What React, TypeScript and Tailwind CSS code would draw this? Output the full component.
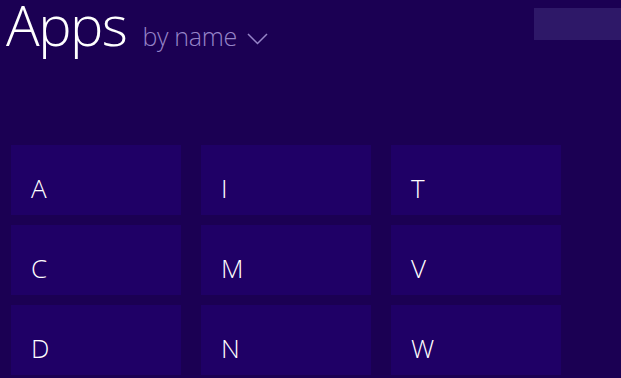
const groups = ["A", "I", "T", "C", "M", "V", "D", "N", "W"];

export default function App() {
  return (
    <div className="h-screen w-full overflow-hidden bg-[#1b0053] text-white" style={{ fontFamily: "'Open Sans', 'Lato', sans-serif" }}>
      <div className="flex h-[56px] items-start justify-between">
        <div className="flex items-baseline pl-[6px]">
          <h1 className="text-[56px] font-light leading-[48px] tracking-[-1.5px]">Apps</h1>
          <button className="ml-[16px] flex items-baseline gap-[10px] text-[25px] font-light tracking-[-0.3px] text-[#9684c8]">
            by name
            <svg width="21" height="12" viewBox="0 0 21 12" className="mt-[4px] self-center">
              <path d="M1 1 L10.5 10.5 L20 1" fill="none" stroke="#9684c8" strokeWidth="1.5" />
            </svg>
          </button>
        </div>
        <div className="mt-[8px] h-[32px] w-[87px] bg-[#2e1868]" />
      </div>

      <div className="mt-[89px] ml-[11px] grid w-fit grid-cols-[170px_170px_170px] gap-x-[20px] gap-y-[10px]">
        {groups.map((g) => (
          <div key={g} className="flex h-[70px] items-end bg-[#1f0066] pb-[14px] pl-[20px] text-[26px] font-light leading-none">
            {g}
          </div>
        ))}
      </div>
    </div>
  );
}
